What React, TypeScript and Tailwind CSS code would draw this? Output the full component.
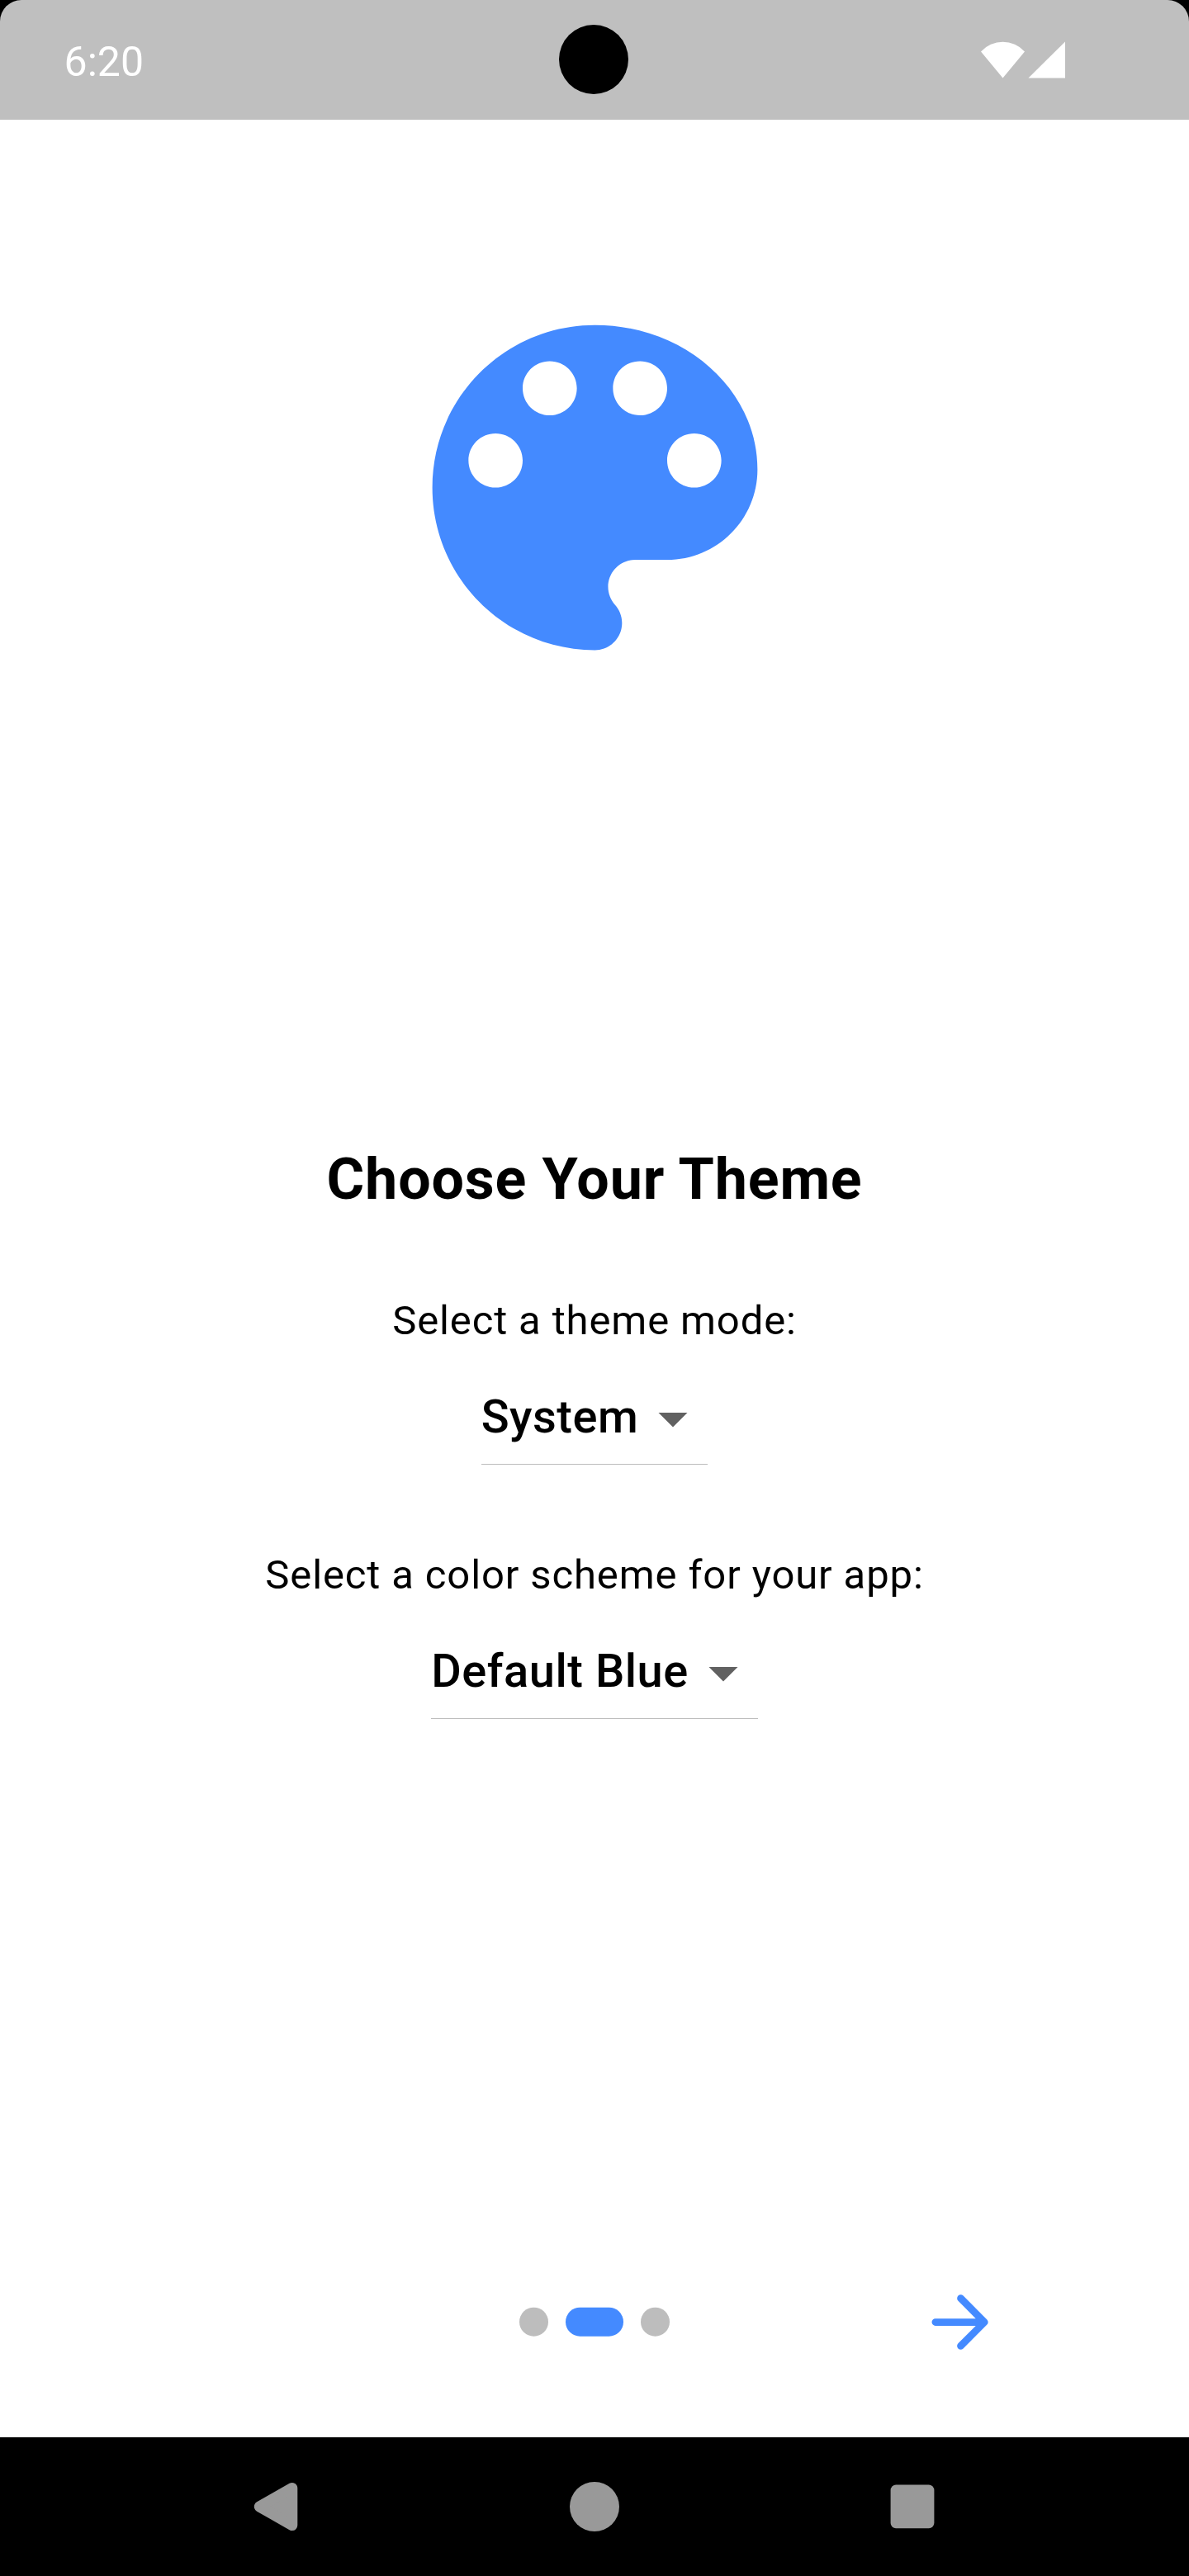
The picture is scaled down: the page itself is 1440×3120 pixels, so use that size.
function StatusBar() {
  return (
    <header className="bg-black">
      <div className="relative flex h-[145px] items-start justify-between rounded-t-[26px] bg-[#bfbfbf] pr-[148px] pl-[77.6px]">
        <span className="pt-[45px] text-[50px] leading-[60px] text-white">6:20</span>
        <div className="absolute top-[30px] left-[677px] size-[84px] rounded-full bg-black" />
        <svg className="mt-[48px] h-[48px] w-[106px]" viewBox="0 0 106 48" fill="#fff">
          <path d="M2 14.4A36 36 0 0 1 55 14.4L28.5 46.5z" />
          <path d="M104 2.4V46.5H59.5z" />
        </svg>
      </div>
    </header>
  );
}

function PaletteIcon() {
  return (
    <svg className="size-[525px]" viewBox="0 0 24 24" fill="#448aff">
      <path d="M12 3c-4.97 0-9 4.03-9 9s4.03 9 9 9c.83 0 1.5-.67 1.5-1.5 0-.39-.15-.74-.39-1.01-.23-.26-.38-.61-.38-.99 0-.83.67-1.5 1.5-1.5H16c2.76 0 5-2.24 5-5 0-4.42-4.03-8-9-8zm-5.5 9c-.83 0-1.5-.67-1.5-1.5S5.67 9 6.5 9 8 9.67 8 10.5 7.33 12 6.5 12zm3-4C8.67 8 8 7.33 8 6.5S8.67 5 9.5 5s1.5.67 1.5 1.5S10.33 8 9.5 8zm5 0c-.83 0-1.5-.67-1.5-1.5S13.67 5 14.5 5s1.5.67 1.5 1.5S15.33 8 14.5 8zm3 4c-.83 0-1.5-.67-1.5-1.5S16.67 9 17.5 9s1.5.67 1.5 1.5-.67 1.5-1.5 1.5z" />
    </svg>
  );
}

function Dropdown({ value }: { value: string }) {
  return (
    <button className="mt-[6px] flex h-[140px] items-start border-b border-[#bdbdbd]">
      <span className="pt-[49px] text-[56px] leading-[66px] font-medium tracking-[0.525px]">{value}</span>
      <svg className="mt-[42px] size-[84px]" viewBox="0 0 24 24" fill="#616161">
        <path d="M7 10l5 5 5-5z" />
      </svg>
    </button>
  );
}

function Label({ children }: { children: string }) {
  return <p className="text-[49px] leading-[57px] tracking-[0.875px]">{children}</p>;
}

function Pager() {
  return (
    <div className="grid h-[105px] grid-cols-3 items-center">
      <div />
      <div className="flex translate-y-[-0.3px] justify-center gap-[21px]">
        <span className="size-[35px] rounded-full bg-[#bdbdbd]" />
        <span className="h-[35px] w-[70px] rounded-full bg-[#448aff]" />
        <span className="size-[35px] rounded-full bg-[#bdbdbd]" />
      </div>
      <button className="pl-[150.5px]">
        <svg className="size-[105px]" viewBox="0 0 24 24" fill="#448aff">
          <path d="M5 13h11.17l-4.88 4.88c-.39.39-.39 1.03 0 1.42.39.39 1.02.39 1.41 0l6.59-6.59c.39-.39.39-1.02 0-1.41l-6.58-6.6c-.39-.39-1.02-.39-1.41 0-.39.39-.39 1.02 0 1.41L16.17 11H5c-.55 0-1 .45-1 1s.45 1 1 1z" />
        </svg>
      </button>
    </div>
  );
}

function NavBar() {
  return (
    <nav className="flex h-[168px] items-center justify-between bg-black pr-[293px] pl-[292px]">
      <svg className="size-[84px]" viewBox="0 0 84 84" fill="#999" stroke="#999" strokeWidth="13" strokeLinejoin="round">
        <path d="M61.8 19.4V64.6L22.3 42z" />
      </svg>
      <svg className="size-[84px]" viewBox="0 0 84 84" fill="#999">
        <circle cx="42" cy="42" r="30" />
      </svg>
      <svg className="size-[84px]" viewBox="0 0 84 84" fill="#999">
        <rect x="15.6" y="15.5" width="52.8" height="52.7" rx="6.5" />
      </svg>
    </nav>
  );
}

export default function App() {
  return (
    <div className="flex h-[3120px] w-[1440px] flex-col overflow-hidden bg-white font-[Roboto,sans-serif] text-black">
      <StatusBar />
      <main className="flex flex-1 flex-col">
        <div className="flex flex-1 flex-col items-center pt-[183px]">
          <PaletteIcon />
          <h1 className="mt-[534px] text-[70px] leading-[82px] font-bold tracking-[0.82px]">Choose Your Theme</h1>
          <div className="mt-[102px] flex flex-col items-center">
            <Label>Select a theme mode:</Label>
            <Dropdown value="System" />
          </div>
          <div className="mt-[105px] flex flex-col items-center">
            <Label>Select a color scheme for your app:</Label>
            <Dropdown value="Default Blue" />
          </div>
        </div>
        <div className="pb-[87px]">
          <Pager />
        </div>
      </main>
      <NavBar />
    </div>
  );
}
